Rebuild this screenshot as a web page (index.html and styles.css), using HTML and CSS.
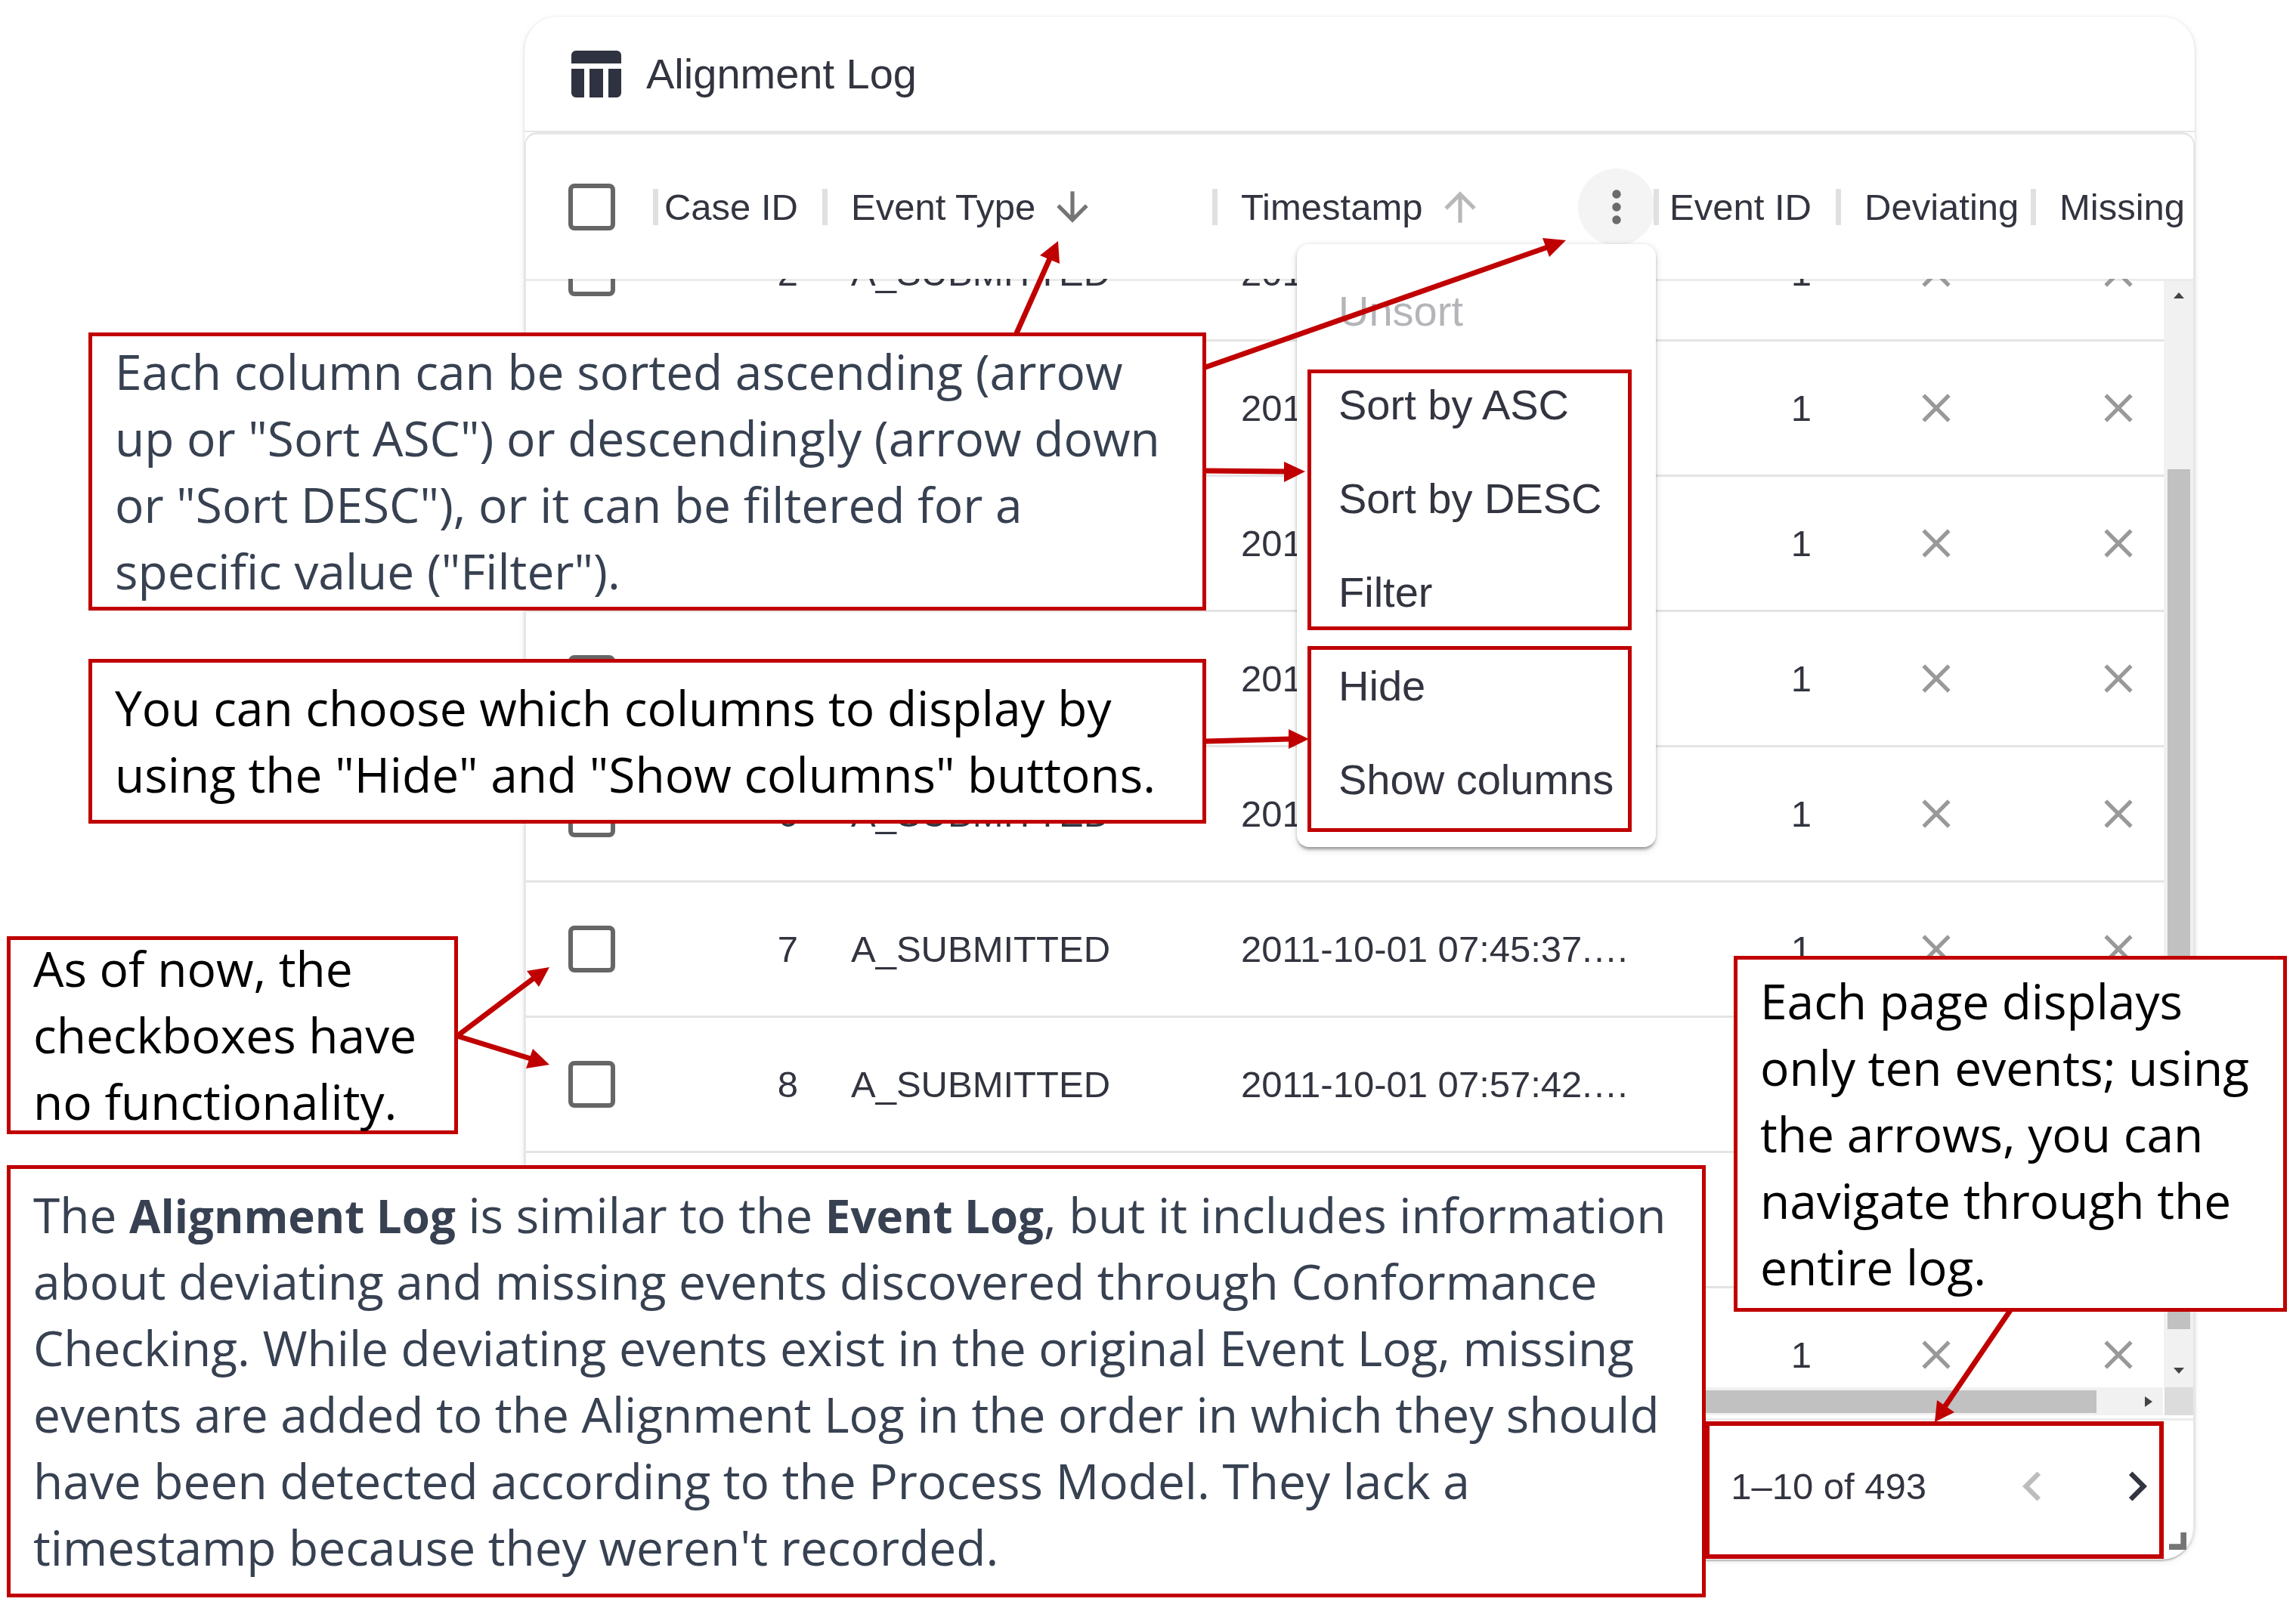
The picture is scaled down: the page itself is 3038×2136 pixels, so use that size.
FILE: index.html
```html
<!DOCTYPE html>
<html lang="en">
<head>
<meta charset="utf-8">
<title>Alignment Log</title>
<link rel="stylesheet" href="styles.css">
</head>
<body>
<svg class="sprite" aria-hidden="true">
  <symbol id="close" viewBox="0 0 24 24"><path d="M19 6.41 17.59 5 12 10.59 6.41 5 5 6.41 10.59 12 5 17.59 6.41 19 12 13.41 17.59 19 19 17.59 13.41 12z"/></symbol>
  <symbol id="up" viewBox="0 0 24 24"><path d="M4 12l1.41 1.41L11 7.83V20h2V7.83l5.58 5.59L20 12l-8-8-8 8z"/></symbol>
  <symbol id="down" viewBox="0 0 24 24"><path d="M20 12l-1.41-1.41L13 16.17V4h-2v12.17l-5.58-5.59L4 12l8 8 8-8z"/></symbol>
  <symbol id="more" viewBox="0 0 24 24"><path d="M12 8c1.1 0 2-.9 2-2s-.9-2-2-2-2 .9-2 2 .9 2 2 2zm0 2c-1.1 0-2 .9-2 2s.9 2 2 2 2-.9 2-2-.9-2-2-2zm0 6c-1.1 0-2 .9-2 2s.9 2 2 2 2-.9 2-2-.9-2-2-2z"/></symbol>
  <symbol id="prev" viewBox="0 0 24 24"><path d="M15.41 16.59 10.83 12l4.58-4.59L14 6l-6 6 6 6z"/></symbol>
  <symbol id="next" viewBox="0 0 24 24"><path d="M8.59 16.59 13.17 12 8.59 7.41 10 6l6 6-6 6z"/></symbol>
</svg>
<main class="page">
  <section class="card">
    <header class="card-head">
      <svg class="logo" viewBox="0 0 66 62" aria-hidden="true"><path d="M6 0h54a6 6 0 0 1 6 6v11H0V6a6 6 0 0 1 6-6zM0 24h17v38H6a6 6 0 0 1-6-6zM24 24h18v38H24zM49 24h17v32a6 6 0 0 1-6 6H49z"/></svg>
      <h1>Alignment Log</h1>
    </header>
    <div class="grid">
      <table>
        <thead>
          <tr>
            <th class="pick"><input type="checkbox" aria-label="Select all rows"></th>
            <th class="num">Case ID</th>
            <th>Event Type<button class="sort" aria-label="Sort descending"><svg><use href="#down"/></svg></button></th>
            <th>Timestamp<button class="sort faint" aria-label="Sort ascending"><svg><use href="#up"/></svg></button><button class="more" aria-label="Column menu"><svg><use href="#more"/></svg></button></th>
            <th class="num">Event ID</th>
            <th>Deviating</th>
            <th>Missing</th>
          </tr>
        </thead>
        <tbody>
          <tr><td class="pick"><input type="checkbox" aria-label="Select case 2"></td><td class="num">2</td><td>A_SUBMITTED</td><td>2011-10-01 00:08:37.…</td><td class="num">1</td><td class="flag"><svg><use href="#close"/></svg></td><td class="flag"><svg><use href="#close"/></svg></td></tr>
          <tr><td class="pick"><input type="checkbox" aria-label="Select case 3"></td><td class="num">3</td><td>A_SUBMITTED</td><td>2011-10-01 00:10:30.…</td><td class="num">1</td><td class="flag"><svg><use href="#close"/></svg></td><td class="flag"><svg><use href="#close"/></svg></td></tr>
          <tr><td class="pick"><input type="checkbox" aria-label="Select case 4"></td><td class="num">4</td><td>A_SUBMITTED</td><td>2011-10-01 00:14:12.…</td><td class="num">1</td><td class="flag"><svg><use href="#close"/></svg></td><td class="flag"><svg><use href="#close"/></svg></td></tr>
          <tr><td class="pick"><input type="checkbox" aria-label="Select case 5"></td><td class="num">5</td><td>A_SUBMITTED</td><td>2011-10-01 00:15:41.…</td><td class="num">1</td><td class="flag"><svg><use href="#close"/></svg></td><td class="flag"><svg><use href="#close"/></svg></td></tr>
          <tr><td class="pick"><input type="checkbox" aria-label="Select case 6"></td><td class="num">6</td><td>A_SUBMITTED</td><td>2011-10-01 00:16:13.…</td><td class="num">1</td><td class="flag"><svg><use href="#close"/></svg></td><td class="flag"><svg><use href="#close"/></svg></td></tr>
          <tr><td class="pick"><input type="checkbox" aria-label="Select case 7"></td><td class="num">7</td><td>A_SUBMITTED</td><td>2011-10-01 07:45:37.…</td><td class="num">1</td><td class="flag"><svg><use href="#close"/></svg></td><td class="flag"><svg><use href="#close"/></svg></td></tr>
          <tr><td class="pick"><input type="checkbox" aria-label="Select case 8"></td><td class="num">8</td><td>A_SUBMITTED</td><td>2011-10-01 07:57:42.…</td><td class="num">1</td><td class="flag"><svg><use href="#close"/></svg></td><td class="flag"><svg><use href="#close"/></svg></td></tr>
          <tr><td class="pick"><input type="checkbox" aria-label="Select case 9"></td><td class="num">9</td><td>A_SUBMITTED</td><td>2011-10-01 08:01:15.…</td><td class="num">1</td><td class="flag"><svg><use href="#close"/></svg></td><td class="flag"><svg><use href="#close"/></svg></td></tr>
          <tr><td class="pick"><input type="checkbox" aria-label="Select case 10"></td><td class="num">10</td><td>A_SUBMITTED</td><td>2011-10-01 08:10:42.…</td><td class="num">1</td><td class="flag"><svg><use href="#close"/></svg></td><td class="flag"><svg><use href="#close"/></svg></td></tr>
        </tbody>
      </table>
      <div class="vscroll" aria-hidden="true">
        <svg class="tri" viewBox="0 0 14 8"><path d="M7 0l7 8H0z"/></svg>
        <div class="vthumb"></div>
        <svg class="tri" viewBox="0 0 14 8"><path d="M0 0h14L7 8z"/></svg>
      </div>
      <div class="hscroll" aria-hidden="true">
        <div class="htrack"><div class="hthumb"></div><svg viewBox="0 0 10 14"><path d="M0 0l10 7-10 7z"/></svg></div>
        <div class="corner"></div>
      </div>
      <footer class="pager">
        <span>1–10 of 493</span>
        <div class="pager-nav">
          <button class="off" aria-label="Previous page"><svg><use href="#prev"/></svg></button>
          <button aria-label="Next page"><svg><use href="#next"/></svg></button>
        </div>
      </footer>
    </div>
    <svg class="resize" viewBox="0 0 24 24" aria-hidden="true"><path d="M16 0h8v24H0v-8h16z"/></svg>
  </section>

  <div class="menu" role="menu">
    <button role="menuitem" disabled>Unsort</button>
    <button role="menuitem">Sort by ASC</button>
    <button role="menuitem">Sort by DESC</button>
    <button role="menuitem">Filter</button>
    <button role="menuitem">Hide</button>
    <button role="menuitem">Show columns</button>
  </div>

  <div class="mark mark-sort"></div>
  <div class="mark mark-hide"></div>
  <div class="mark mark-pager"></div>

  <aside class="note note-sort"><p>Each column can be sorted ascending (arrow<br>up or "Sort ASC") or descendingly (arrow down<br>or "Sort DESC"), or it can be filtered for a<br>specific value ("Filter").</p></aside>
  <aside class="note note-hide"><p>You can choose which columns to display by<br>using the "Hide" and "Show columns" buttons.</p></aside>
  <aside class="note note-check"><p>As of now, the<br>checkboxes have<br>no functionality.</p></aside>
  <aside class="note note-log"><p>The <b>Alignment Log</b> is similar to the <b>Event Log</b>, but it includes information<br>about deviating and missing events discovered through Conformance<br>Checking. While deviating events exist in the original Event Log, missing<br>events are added to the Alignment Log in the order in which they should<br>have been detected according to the Process Model. They lack a<br>timestamp because they weren't recorded.</p></aside>
  <aside class="note note-page"><p>Each page displays<br>only ten events; using<br>the arrows, you can<br>navigate through the<br>entire log.</p></aside>

  <svg class="arrows" viewBox="0 0 3038 2136" aria-hidden="true">
    <path class="line" d="M1345 441L1390 340M1595 486L2048 327M1595 623L1702 624M1595 981L1708 978M605 1371L707 1294M605 1371L702 1401M2660 1734L2573 1862"/>
    <path d="M1400 319L1376 338L1402 349zM2072 318L2041 315L2050 340zM1727 624L1699 611V638zM1732 978L1705 965V991zM727 1280L697 1285L713 1306zM727 1409L705 1388L696 1414zM2560 1882L2563 1853L2586 1869z"/>
  </svg>
</main>
</body>
</html>
```
FILE: styles.css
```css
* { box-sizing: border-box; }

body {
  margin: 0;
  background: #fff;
  color: #32343f;
  font: 49px/56px "Liberation Sans", Arial, sans-serif;
}

button {
  display: flex;
  align-items: center;
  justify-content: center;
  padding: 0;
  border: 0;
  background: none;
  color: inherit;
  font: inherit;
}

svg { display: block; fill: currentColor; }

.sprite { position: absolute; width: 0; height: 0; }

.page {
  position: relative;
  padding: 22px 134px 72px 694px;
  overflow: hidden;
}

/* Card */
.card {
  position: relative;
  border-radius: 44px;
  background: #fff;
  box-shadow: 0 4px 3px -3px rgba(0, 0, 0, .3), 0 1px 3px rgba(0, 0, 0, .14), 0 2px 8px rgba(0, 0, 0, .1);
}

.card-head {
  display: flex;
  align-items: center;
  gap: 33px;
  height: 153px;
  padding: 0 62px;
  border-bottom: 2px solid #e6e6e6;
}

.logo { width: 66px; height: 62px; color: #2f3240; }

h1 { margin: 0; font-size: 56px; font-weight: 400; line-height: 64px; }

.grid {
  position: relative;
  border: 2px solid #e6e6e6;
  border-top-width: 3px;
  border-bottom: 0;
  border-radius: 16px 16px 44px 44px;
}

/* Table */
table, thead, tbody { display: block; }

tr {
  display: grid;
  grid-template-columns: 172px 224px 516px 584px 241px 258px 224px;
}

th, td {
  display: flex;
  align-items: center;
  padding: 0 0 0 34px;
  font-weight: 400;
  white-space: nowrap;
}

thead tr { height: 191px; }

th { position: relative; }

th + th::before {
  content: "";
  position: absolute;
  left: -4px;
  width: 7px;
  height: 48px;
  background: #e0e0e0;
}

/* The header rule lies behind the rows that scroll past it. */
tbody {
  height: 1467px;
  overflow: hidden;
  background: linear-gradient(#ebebeb, #ebebeb) 0 0 / 100% 3px no-repeat;
}

tbody tr { height: 179px; border-bottom: 3px solid #e4e4e4; }

/* The list is scrolled part of the way past its first row. */
tbody tr:first-child { margin-top: -96px; }

.num { justify-content: flex-end; padding: 0 36px 0 0; }
.pick { padding-left: 56px; }
.flag { justify-content: center; padding: 0; color: #999; }
.flag svg { width: 64px; height: 64px; }

input[type="checkbox"] {
  appearance: none;
  width: 62px;
  height: 62px;
  margin: 0;
  border: 6px solid #666;
  border-radius: 8px;
}

.sort { margin-left: 18px; color: #757575; }
.sort svg { width: 62px; height: 62px; }
.faint { color: #b8b8b8; }

.more {
  width: 102px;
  height: 102px;
  margin: 0 2px 0 auto;
  border-radius: 50%;
  background: #f4f4f4;
  color: #6b6b6b;
}
.more svg { width: 68px; height: 68px; }

/* Scroll bars */
.vscroll {
  position: absolute;
  top: 194px;
  right: 0;
  display: flex;
  flex-direction: column;
  align-items: center;
  justify-content: space-between;
  width: 39px;
  height: 1464px;
  padding: 15px 0 18px;
  background: #f1f1f1;
  color: #444;
}
.tri { width: 14px; height: 8px; }
.vthumb { width: 30px; height: 1138px; margin-top: 226px; margin-bottom: auto; background: #c1c1c1; }

.hscroll { display: flex; gap: 2px; height: 41px; padding-bottom: 4px; }
.htrack {
  display: flex;
  flex: 1;
  align-items: center;
  background: #f1f1f1;
  color: #444;
}
.hthumb { flex: 1; height: 30px; margin: 0 64px 0 40px; background: #c1c1c1; }
.htrack svg { width: 10px; height: 14px; margin-right: 14px; }
.corner { width: 38px; background: #dcdcdc; }

/* Footer */
.pager {
  display: flex;
  align-items: center;
  justify-content: flex-end;
  gap: 70px;
  height: 187px;
  padding: 0 5px 10px 0;
  border-top: 3px solid #ebebeb;
}
.pager-nav { display: flex; }
.pager-nav button { width: 139px; height: 100px; }
.pager-nav svg { width: 78px; height: 78px; }
.pager-nav .off { color: #bdbdbd; }

.resize {
  position: absolute;
  right: 11px;
  bottom: 13px;
  width: 23px;
  height: 23px;
  color: #757575;
}

/* Column menu */
.menu {
  position: absolute;
  left: 1716px;
  top: 323px;
  width: 475px;
  padding: 27px 0;
  border-radius: 16px;
  background: #fff;
  box-shadow: 0 5px 4px -2px rgba(0, 0, 0, .3), 0 1px 4px rgba(0, 0, 0, .14), 0 3px 12px rgba(0, 0, 0, .12);
}
.menu button {
  justify-content: flex-start;
  width: 100%;
  height: 124px;
  padding-left: 55px;
  font-size: 56px;
}
.menu button:disabled { color: #b4b5b9; }

/* Annotations */
.mark, .note { position: absolute; border: 5px solid #c00000; }
.mark-sort { left: 1730px; top: 489px; width: 429px; height: 345px; }
.mark-hide { left: 1730px; top: 855px; width: 429px; height: 246px; }
.mark-pager { left: 2256px; top: 1881px; width: 607px; height: 182px; border-width: 6px; }

.note {
  display: flex;
  align-items: center;
  padding: 0 30px;
  background: #fff;
  color: #000;
  font: 64px/88px "Open Sans", "Noto Sans", sans-serif;
  white-space: nowrap;
}
.note p { margin: 0; }
.note b { font-size: 60px; line-height: 60px; }
.note-sort { left: 117px; top: 440px; width: 1479px; height: 368px; color: #374151; }
.note-hide { left: 117px; top: 872px; width: 1479px; height: 218px; }
.note-check { left: 9px; top: 1239px; width: 597px; height: 262px; }
.note-log { left: 9px; top: 1542px; width: 2248px; height: 572px; color: #374151; }
.note-page { left: 2294px; top: 1265px; width: 732px; height: 471px; }

.arrows {
  position: absolute;
  left: 0;
  top: 0;
  width: 3038px;
  height: 2136px;
  color: #c00000;
  pointer-events: none;
}
.line { fill: none; stroke: currentColor; stroke-width: 7; }
```
